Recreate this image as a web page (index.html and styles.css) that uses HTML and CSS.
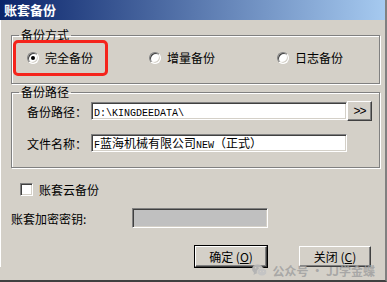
FILE: index.html
```html
<!DOCTYPE html>
<html lang="zh-CN">
<head>
    <meta charset="UTF-8">
    <title>账套备份</title>
    <link rel="stylesheet" href="styles.css">
</head>
<body>

    <div class="window">
        <div class="titlebar">账套备份</div>
        <div class="content">

            <fieldset class="group">
                <legend>备份方式</legend>
                <div class="radio-row">
                    <label class="option first">
                        <span class="radio checked"></span>完全备份
                        <span class="mark"></span>
                    </label>
                    <label class="option second">
                        <span class="radio"></span>增量备份
                    </label>
                    <label class="option">
                        <span class="radio"></span>日志备份
                    </label>
                </div>
            </fieldset>

            <fieldset class="group path-group">
                <legend>备份路径</legend>
                <div class="field-row">
                    <span class="field-label">备份路径：</span>
                    <div class="textbox"><span class="mono">D:\KINGDEEDATA\</span></div>
                    <button class="btn browse">&gt;&gt;</button>
                </div>
                <div class="field-row">
                    <span class="field-label">文件名称：</span>
                    <div class="textbox"><span class="mono">F</span>蓝海机械有限公司<span class="mono">NEW</span>（正式）</div>
                </div>
            </fieldset>

            <label class="check-row">
                <span class="checkbox"></span>账套云备份
            </label>

            <div class="key-row">
                <span class="key-label">账套加密密钥:</span>
                <div class="textbox disabled"></div>
            </div>

            <div class="buttons">
                <button class="btn action default">确定 (<u>O</u>)</button>
                <button class="btn action">关闭 (<u>C</u>)</button>
                <div class="watermark">
                    <svg width="15" height="13" viewBox="0 0 15 13">
                        <ellipse cx="5.5" cy="5" rx="5.5" ry="4.6" fill="#b4b4b4"/>
                        <path d="M2 8.5 L1.5 11 L4.5 9.3 Z" fill="#b4b4b4"/>
                        <ellipse cx="10" cy="8" rx="4.8" ry="4" fill="#c4c4c4" stroke="#d4d0c8" stroke-width="0.8"/>
                        <circle cx="3.6" cy="3.8" r="0.8" fill="#d4d0c8"/>
                        <circle cx="7.2" cy="3.8" r="0.8" fill="#d4d0c8"/>
                        <circle cx="8.5" cy="7.3" r="0.6" fill="#d4d0c8"/>
                        <circle cx="11.5" cy="7.3" r="0.6" fill="#d4d0c8"/>
                    </svg>
                    <span>公众号 · JJ学金蝶</span>
                </div>
            </div>

        </div>
    </div>

</body>
</html>
```

FILE: styles.css
```css
body {
    margin: 0;
    font-family: "Noto Sans CJK SC", "Liberation Sans", sans-serif;
    font-size: 12px;
    color: #000;
}

.window {
    width: 387px;
    height: 282px;
    box-sizing: border-box;
    background: #d4d0c8;
    border-right: 2px solid #808080;
    border-bottom: 2px solid #404040;
    overflow: hidden;
}

.titlebar {
    height: 20px;
    line-height: 20px;
    padding-left: 4px;
    background: linear-gradient(to right, #0a246a, #a6caf0);
    color: #fff;
    font-weight: bold;
    font-size: 13px;
}

.content {
    padding: 8px 5px 0 10px;
    border-left: 1px solid #fff;
}

/* group boxes */
.group {
    margin: 0;
    padding: 9px 0 18px 15px;
    min-width: 0;
    border: 1px solid #808080;
    box-shadow: inset 1px 1px 0 #fff, 1px 1px 0 #fff;
}

.group legend {
    padding: 0 2px;
    margin-left: -8px;
    line-height: 14px;
}

.radio-row {
    display: flex;
    height: 14px;
    align-items: center;
}

.option {
    display: flex;
    align-items: center;
    gap: 6px;
    line-height: 14px;
}

.option.first {
    width: 122px;
    position: relative;
}

.option.second {
    width: 128px;
}

.radio {
    width: 10px;
    height: 10px;
    border-radius: 50%;
    border: 1px solid;
    border-color: #808080 #fff #fff #808080;
    background: #fff;
    box-shadow: inset 1px 1px 0 #404040, inset -1px -1px 0 #d4d0c8;
    position: relative;
}

.radio.checked::after {
    content: "";
    position: absolute;
    left: 3px;
    top: 3px;
    width: 4px;
    height: 4px;
    border-radius: 50%;
    background: #000;
}

/* red highlight drawn over the first option */
.mark {
    position: absolute;
    left: -14px;
    top: -11px;
    width: 89px;
    height: 30px;
    border: 3px solid #f5241c;
    border-radius: 5px;
}

.path-group {
    margin-top: 1px;
    padding: 2px 0 14px 15px;
}

.field-row {
    display: flex;
    align-items: center;
    height: 20px;
}

.field-row + .field-row {
    margin-top: 12px;
}

.field-label {
    width: 64px;
}

.textbox {
    width: 252px;
    height: 16px;
    line-height: 16px;
    padding-left: 2px;
    background: #fff;
    border: 1px solid;
    border-color: #808080 #fff #fff #808080;
    box-shadow: inset 1px 1px 0 #404040, inset -1px -1px 0 #d4d0c8;
    white-space: nowrap;
    overflow: hidden;
}

.mono {
    font-family: "Liberation Mono", monospace;
    font-size: 10px;
}

.btn {
    font-family: "Noto Sans CJK SC", sans-serif;
    font-size: 12px;
    background: #d4d0c8;
    border: 1px solid;
    border-color: #fff #404040 #404040 #fff;
    box-shadow: inset -1px -1px 0 #808080;
    padding: 0;
    margin: 0;
    color: #000;
}

.browse {
    width: 25px;
    height: 20px;
    line-height: 16px;
    font-family: "Liberation Sans", sans-serif;
    letter-spacing: -1px;
}

.check-row {
    display: flex;
    align-items: center;
    gap: 6px;
    margin: 14px 0 0 9px;
    height: 14px;
}

.checkbox {
    width: 11px;
    height: 11px;
    background: #fff;
    border: 1px solid;
    border-color: #808080 #fff #fff #808080;
    box-shadow: inset 1px 1px 0 #404040, inset -1px -1px 0 #d4d0c8;
}

.key-row {
    display: flex;
    align-items: center;
    margin-top: 12px;
    height: 20px;
}

.key-label {
    width: 121px;
}

.textbox.disabled {
    width: 134px;
    height: 18px;
    padding: 0;
    background: #c0c0c0;
}

.buttons {
    display: flex;
    justify-content: flex-end;
    gap: 32px;
    margin: 18px 9px 0 0;
    position: relative;
}

.action {
    width: 72px;
    height: 21px;
    line-height: 17px;
}

.action.default {
    outline: 1px solid #000;
    outline-offset: 0;
}

.watermark {
    position: absolute;
    right: -4px;
    top: 16px;
    display: flex;
    align-items: center;
    gap: 5px;
    color: rgba(160, 160, 160, 0.85);
    font-size: 12px;
    font-weight: bold;
    pointer-events: none;
}
```
